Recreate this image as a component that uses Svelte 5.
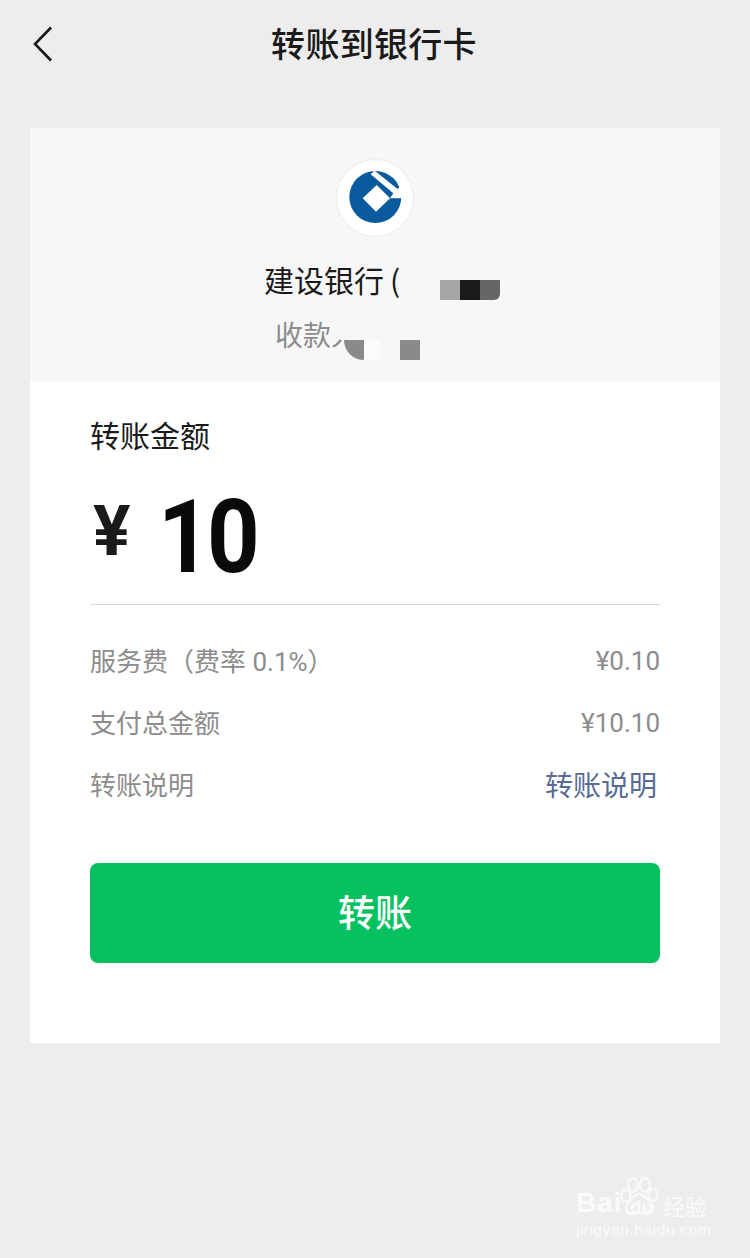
<script>
  const rows = [
    { label: '服务费（费率 0.1%）', value: '¥0.10' },
    { label: '支付总金额', value: '¥10.10' }
  ];
</script>

<div class="page">
  <header class="nav">
    <svg class="back" width="20" height="36" viewBox="0 0 20 36"><path d="M18 1.5 2 18l16 16.500" fill="none" stroke="#1a1a1a" stroke-width="2.600"/></svg>
    <h1>转账到银行卡</h1>
  </header>

  <main class="card">
    <section class="payee">
      <div class="logo">
        <svg width="54" height="54" viewBox="0 0 54 54">
          <circle cx="27.300" cy="26" r="26" fill="#0a5a9e"/>
          <path d="M14.700 27.300 28.700 14 42 27.300 28 40.700Z" fill="#fff"/>
          <path d="M42 27.300H56V11L49.500 18 26.500-.5 22.700 3.300 45.300 22.300Z" fill="#fff"/>
        </svg>
      </div>
      <div class="bank">建设银行&#8201;(</div>
      <div class="holder">收款人</div>
      <div class="mosaic m1"><i class="a"></i><i class="b"></i><i class="c"></i></div>
      <div class="cover c1"></div>
      <div class="cover c2"></div>
      <div class="mosaic m2"><i class="d"></i><i class="e"></i><i class="f"></i></div>
    </section>

    <section class="form">
      <div class="amount-label">转账金额</div>
      <div class="amount"><span class="yen">¥</span><span class="num">10</span></div>
      <div class="rows">
        {#each rows as row}
          <div class="row"><span class="label">{row.label}</span><span>{row.value}</span></div>
        {/each}
        <div class="row"><span class="label">转账说明</span><span class="link">转账说明</span></div>
      </div>
      <button class="submit">转账</button>
    </section>
  </main>

  <div class="watermark">
    <svg class="paw" width="42" height="42" viewBox="0 0 42 42" fill="none" stroke="#fff" stroke-width="2">
      <ellipse cx="13" cy="8" rx="5" ry="7"/>
      <ellipse cx="25" cy="8" rx="5" ry="7"/>
      <ellipse cx="6" cy="19" rx="4.500" ry="6"/>
      <ellipse cx="33" cy="18" rx="4.500" ry="6"/>
      <path d="M19 17c6 0 8 6 12 9 5 5 1 12-5 11-4-1-9-1-13 0-6 1-9-6-5-11 4-3 5-9 11-9Z"/>
    </svg>
    <div class="wm-top"><span class="bai">Bai</span><span class="du">du</span><span class="jy">经验</span></div>
    <div class="wm-url">jingyan.baidu.com</div>
  </div>
</div>

<style>
  :global(body) {
    margin: 0;
    background: #ededed;
  }

  .page {
    position: relative;
    height: 1258px;
    padding: 0 30px;
    box-sizing: border-box;
    overflow: hidden;
    font-family: "Noto Sans CJK SC", "Noto Sans", sans-serif;
    background: #ededed;
  }

  .nav {
    position: relative;
    height: 88px;
    margin-bottom: 40px;
    display: flex;
    align-items: center;
    justify-content: center;
  }

  .back {
    position: absolute;
    left: 3px;
    top: 26px;
  }

  h1 {
    margin: 0 2px 2px 0;
    font-size: 34px;
    font-weight: 500;
    color: #1a1a1a;
    line-height: 86px;
    letter-spacing: 0.3px;
  }

  .card {
    background: #fff;
    height: 915px;
  }

  .payee {
    position: relative;
    height: 254px;
    padding-top: 32px;
    box-sizing: border-box;
    background: #f7f7f7;
    display: flex;
    flex-direction: column;
    align-items: center;
  }

  .logo {
    width: 76px;
    height: 76px;
    border-radius: 50%;
    background: #fff;
    box-shadow: 0 0 3px rgba(0, 0, 0, 0.1);
    display: flex;
    align-items: center;
    justify-content: center;
  }

  .bank {
    align-self: flex-start;
    margin: 21px 0 0 234px;
    font-size: 30px;
    line-height: 44px;
    color: #1a1a1a;
    white-space: pre;
  }

  .holder {
    align-self: flex-start;
    margin: 11px 0 0 245px;
    font-size: 28px;
    line-height: 44px;
    color: #8c8c8c;
  }

  .mosaic {
    position: absolute;
    display: flex;
  }

  .mosaic i {
    display: block;
    width: 20px;
    height: 20px;
  }

  .m1 {
    left: 410px;
    top: 152px;
  }

  .a { background: #a6a6a6; }
  .b { background: #1a1a1a; }
  .c { background: #666; border-bottom-right-radius: 6px; }

  .cover {
    position: absolute;
    background: #f7f7f7;
  }

  .c1 {
    left: 310px;
    top: 190px;
    width: 50px;
    height: 22px;
  }

  .c2 {
    left: 301px;
    top: 190px;
    width: 12px;
    height: 13px;
  }

  .m2 {
    left: 310px;
    top: 212px;
  }

  .d {
    background: #8a8a8a;
    border-bottom-left-radius: 20px;
    transform: translateX(4px);
  }

  .e {
    background: #fbfbfb;
    margin-right: 20px;
  }

  .f { background: #8a8a8a; }

  .form {
    padding: 0 60px;
  }

  .amount-label {
    padding-top: 30px;
    height: 46px;
    font-size: 30px;
    line-height: 44px;
    color: #1a1a1a;
  }

  .amount {
    height: 146px;
    display: flex;
    align-items: center;
    border-bottom: 1px solid #d9d9d9;
    color: #0a0a0a;
    font-family: Roboto, sans-serif;
  }

  .yen {
    font-size: 70px;
    font-weight: 700;
    color: #1a1a1a;
    margin: 0 27px 0 3px;
    line-height: 1;
  }

  .num {
    padding-top: 12px;
    font-size: 102px;
    font-weight: 700;
    line-height: 1;
    letter-spacing: -4px;
    transform: scaleX(0.9);
    transform-origin: left center;
  }

  .rows {
    padding-top: 36px;
    display: flex;
    flex-direction: column;
    gap: 22px;
    font-family: Roboto, "Noto Sans CJK SC", sans-serif;
  }

  .row {
    height: 40px;
    display: flex;
    align-items: center;
    justify-content: space-between;
    font-size: 26px;
    color: #8c8c8c;
    white-space: pre;
  }

  .label {
    margin-bottom: 4px;
  }

  .link {
    margin: 0 3px 2px 0;
    font-size: 28px;
    color: #576b95;
  }

  .submit {
    display: block;
    width: 100%;
    height: 100px;
    margin-top: 58px;
    padding: 0 0 4px;
    border: 0;
    border-radius: 8px;
    background: #07c160;
    color: #fff;
    font-family: inherit;
    font-size: 37px;
    font-weight: 500;
  }

  .watermark {
    position: absolute;
    left: 576px;
    top: 1176px;
    width: 140px;
    color: #fff;
    font-family: "Liberation Sans", sans-serif;
    opacity: 0.75;
  }

  .paw {
    position: absolute;
    left: 44px;
    top: 1px;
  }

  .wm-top {
    height: 44px;
    display: flex;
    align-items: flex-end;
    font-weight: 700;
  }

  .bai {
    font-size: 28px;
    line-height: 34px;
    letter-spacing: 1px;
    width: 50px;
  }

  .du {
    font-size: 19px;
    line-height: 26px;
    width: 37px;
    padding-left: 4px;
    box-sizing: border-box;
  }

  .jy {
    font-family: "Noto Sans CJK SC", sans-serif;
    font-size: 22px;
    font-weight: 400;
    line-height: 30px;
  }

  .wm-url {
    font-size: 15.500px;
    letter-spacing: 0.6px;
    line-height: 20px;
    white-space: nowrap;
  }
</style>
